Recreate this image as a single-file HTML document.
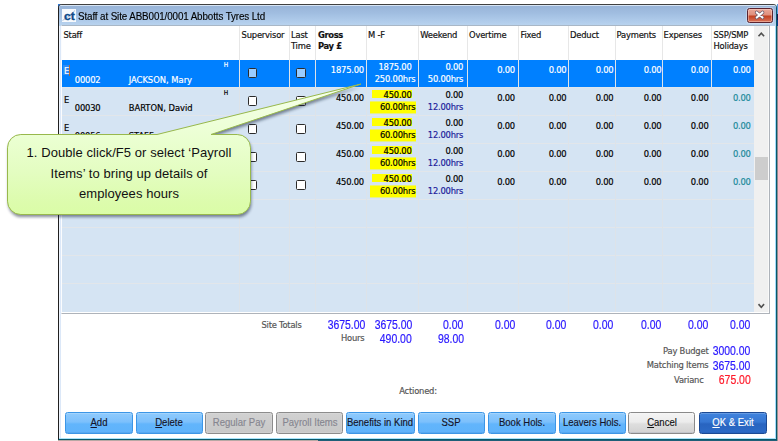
<!DOCTYPE html><html><head><meta charset="utf-8"><title>Staff at Site</title><style>
*{margin:0;padding:0;box-sizing:border-box}
html,body{width:778px;height:441px;overflow:hidden;background:#fff}
body{position:relative;font-family:'DejaVu Sans Condensed','Liberation Sans',sans-serif;font-size:9.3px;color:#000}
.abs{position:absolute}
#deskR{left:777px;top:4px;width:1px;height:437px;background:linear-gradient(#5a9ae0 0,#5a9ae0 10px,#1a1a50 10px,#1a1a50 16px,#0c3c8c 16px,#0c3c8c 22px,#8a8490 22px,#9a9494 100%)}
#deskB{left:58px;top:440px;width:719px;height:1px;background:linear-gradient(90deg,#b8a8a4 0,#b8a8a4 260px,#1f5f78 260px,#1f5f78 100%)}
#win{left:58px;top:4px;width:719px;height:436px;background:#fff;border:1px solid #202020;border-top-color:#404040;border-right-color:#08586a;border-bottom-color:#08586a;border-radius:4px 4px 0 0;overflow:hidden}
#title{left:0;top:0;width:717px;height:21px;background:linear-gradient(#d6e4f4 0,#d6e4f4 1px,#98b4d8 1.2px,#a1bee1 40%,#adc9e9 70%,#bad4ef 100%)}
#title .txt{left:18.8px;top:5.5px;font-family:'Liberation Sans',sans-serif;font-size:10.4px;line-height:12px;color:#000;white-space:nowrap;letter-spacing:-0.12px;-webkit-text-stroke:0.15px currentColor;transform:scaleX(0.9455);transform-origin:0 50%}
#lb{left:0;top:21px;width:2px;height:413px;background:linear-gradient(90deg,#eef4fd 0,#eef4fd 1px,#dce8f8 1px)}
#rb{left:716px;top:21px;width:1px;height:413px;background:#a0dcfc}
#bb{left:0;top:433px;width:717px;height:1px;background:#a8e4fc}
.t{position:absolute;white-space:nowrap;line-height:11px;font-size:9.3px;letter-spacing:-0.2px;-webkit-text-stroke:0.18px currentColor}
.r{text-align:right}
.hd{color:#111}
.vl{position:absolute;width:1px;background:#e7e7e7}
.hl{position:absolute;height:1px;background:#e2e6ea}
.cb{position:absolute;width:9.5px;height:9.5px;border:1px solid #2b2b2b;border-radius:1.5px;background:#fff}
.yl{position:absolute;background:#ffff00}
.num{font-family:'Liberation Sans',sans-serif;font-size:12px;color:#2a18ff;line-height:12px;position:absolute;white-space:nowrap;text-align:right;-webkit-text-stroke:0.2px currentColor;transform:scaleX(0.87);transform-origin:100% 50%}
.lab{color:#555}
.btn{position:absolute;top:412px;height:22px;width:68px;border:1px solid #3c96e6;border-radius:2.5px;background:linear-gradient(#8fcbfd 0,#7cc0fc 45%,#62b5fc 55%,#5fb3fb 100%);font-family:'Liberation Sans',sans-serif;font-size:10.2px;text-align:center;line-height:20.8px;color:#141428;-webkit-text-stroke:0.15px currentColor;white-space:nowrap;overflow:hidden;box-shadow:inset 0 1px 0 rgba(255,255,255,.2),inset 0 -1px 0 rgba(0,40,120,.08)}
.btn span{position:absolute;left:50%;top:0;transform:translateX(-50%) scaleX(0.935);transform-origin:50% 50%}
.btn.dis{background:linear-gradient(#d1d1d1,#c8c8c8);border-color:#8c8c8c;color:#868690;box-shadow:inset 0 0 0 1px rgba(255,255,255,.12)}
.btn.can{background:linear-gradient(#f4f4f4 0,#ececec 45%,#dedede 55%,#d2d2d2 100%);border-color:#8a8a8a;color:#111}
.btn.ok{background:linear-gradient(#4084de 0,#3676d2 45%,#2864c0 55%,#2c6ac6 100%);border-color:#1c4a94;color:#fff}
u{text-decoration:underline}
</style></head><body>
<div id="deskR" class="abs"></div><div id="deskB" class="abs"></div>
<div class="abs" style="left:58px;top:4px;width:3px;height:3px;background:#2a7ae0"></div>
<div id="win" class="abs">
<div id="title" class="abs">
<div class="abs" style="left:3px;top:4px;width:13.5px;height:13px;background:#f6f9fd"></div>
<svg class="abs" style="left:3px;top:4px" width="14" height="13" viewBox="0 0 14 13"><path d="M0.5 11.5 Q7 8 13 1.5" stroke="#a8c0dc" stroke-width="1" fill="none"/><text x="2.1" y="10.9" font-family="Liberation Sans,sans-serif" font-weight="bold" font-size="11.2" fill="#0e4a8a" stroke="#0e4a8a" stroke-width="0.35" letter-spacing="-0.1" transform="scale(1.08,0.9)" style="transform-origin:2px 10.9px">ct</text></svg>
<div class="abs txt" id="ttl">Staff at Site ABB001/0001 Abbotts Tyres Ltd</div>
<div class="abs" style="left:688px;top:3px;width:26px;height:14.7px;border:1px solid #5a2430;border-radius:2.5px;background:linear-gradient(#eaa898 0,#df8e7c 47%,#c2401f 53%,#d9735a 100%);box-shadow:0 0 0 1px rgba(255,255,255,.3),inset 0 0 0 1px rgba(255,220,210,.45)"></div>
<svg class="abs" style="left:695px;top:5px" width="12" height="10" viewBox="0 0 12 10"><path d="M2.7 2.4 L8.5 7.6 M8.5 2.4 L2.7 7.6" stroke="#6a5a6a" stroke-width="3.4" stroke-linecap="round"/><path d="M2.7 2.4 L8.5 7.6 M8.5 2.4 L2.7 7.6" stroke="#fff" stroke-width="2" stroke-linecap="round"/></svg>
</div>
<div id="lb" class="abs"></div><div id="rb" class="abs"></div><div id="bb" class="abs"></div>
</div>
<div class="abs" style="left:61px;top:25px;width:709px;height:289px;border:1px solid #aeb3ba;border-top-color:#a9b7c6;border-left-color:#fbfcfe;background:#fff"></div>
<div class="abs" style="left:62px;top:60px;width:692px;height:252px;background:#d5e4f3"></div>
<div class="abs sel" style="left:62px;top:60px;width:691.5px;height:26.8px;background:#0080ff"></div>
<div class="abs" style="left:754px;top:26px;width:15px;height:286px;background:linear-gradient(90deg,#f0f0f0 0,#f0f0f0 14px,#f9f9f9 14px)"></div>
<div class="abs" style="left:755px;top:157px;width:12.5px;height:23px;background:#cdcdcd"></div>
<svg class="abs" style="left:757px;top:31px" width="9" height="7" viewBox="0 0 9 7"><path d="M1.5 5.2 L4.3 2.1 L7.1 5.2" fill="none" stroke="#505050" stroke-width="1.6"/></svg>
<svg class="abs" style="left:757px;top:302px" width="9" height="7" viewBox="0 0 9 7"><path d="M1.5 2.1 L4.3 5.2 L7.1 2.1" fill="none" stroke="#505050" stroke-width="1.6"/></svg>
<div class="hl" style="left:62px;top:115px;width:692px"></div>
<div class="hl" style="left:62px;top:143px;width:692px"></div>
<div class="hl" style="left:62px;top:171px;width:692px"></div>
<div class="hl" style="left:62px;top:199px;width:692px"></div>
<div class="hl" style="left:62px;top:227px;width:692px"></div>
<div class="hl" style="left:62px;top:255px;width:692px"></div>
<div class="hl" style="left:62px;top:283px;width:692px"></div>
<div class="hl" style="left:62px;top:87px;width:692px;background:#dfe6ee"></div>
<div class="vl" style="left:239.2px;top:26px;height:34px"></div>
<div class="vl" style="left:239.2px;top:60px;height:252px;background:#dde3e9"></div>
<div class="vl" style="left:289px;top:26px;height:34px"></div>
<div class="vl" style="left:289px;top:60px;height:252px;background:#dde3e9"></div>
<div class="vl" style="left:315px;top:26px;height:34px"></div>
<div class="vl" style="left:315px;top:60px;height:252px;background:#dde3e9"></div>
<div class="vl" style="left:365.6px;top:26px;height:34px"></div>
<div class="vl" style="left:365.6px;top:60px;height:252px;background:#dde3e9"></div>
<div class="vl" style="left:417.8px;top:26px;height:34px"></div>
<div class="vl" style="left:417.8px;top:60px;height:252px;background:#dde3e9"></div>
<div class="vl" style="left:467px;top:26px;height:34px"></div>
<div class="vl" style="left:467px;top:60px;height:252px;background:#dde3e9"></div>
<div class="vl" style="left:518px;top:26px;height:34px"></div>
<div class="vl" style="left:518px;top:60px;height:252px;background:#dde3e9"></div>
<div class="vl" style="left:568px;top:26px;height:34px"></div>
<div class="vl" style="left:568px;top:60px;height:252px;background:#dde3e9"></div>
<div class="vl" style="left:615px;top:26px;height:34px"></div>
<div class="vl" style="left:615px;top:60px;height:252px;background:#dde3e9"></div>
<div class="vl" style="left:662px;top:26px;height:34px"></div>
<div class="vl" style="left:662px;top:60px;height:252px;background:#dde3e9"></div>
<div class="vl" style="left:711px;top:26px;height:34px"></div>
<div class="vl" style="left:711px;top:60px;height:252px;background:#dde3e9"></div>
<div class="t hd" style="left:63.5px;top:28.86px;">Staff</div>
<div class="t hd" style="left:241.6px;top:28.86px;">Supervisor</div>
<div class="t hd" style="left:291px;top:28.86px;">Last<br>Time</div>
<div class="t hd" style="left:318px;top:28.86px;font-weight:bold;letter-spacing:-0.35px">Gross<br>Pay £</div>
<div class="t hd" style="left:368px;top:28.86px;">M -F</div>
<div class="t hd" style="left:420.3px;top:28.86px;">Weekend</div>
<div class="t hd" style="left:469px;top:28.86px;">Overtime</div>
<div class="t hd" style="left:520.5px;top:28.86px;">Fixed</div>
<div class="t hd" style="left:570px;top:28.86px;">Deduct</div>
<div class="t hd" style="left:616.6px;top:28.86px;">Payments</div>
<div class="t hd" style="left:663.6px;top:28.86px;">Expenses</div>
<div class="t hd" style="left:713.5px;top:28.86px;">SSP/SMP<br>Holidays</div>
<div class="abs" style="left:63px;top:65px;width:6px;height:10px;background:#2b8cf8"></div>
<div class="abs" style="left:69px;top:65px;width:1.2px;height:10.5px;background:#a8683c"></div>
<div class="t " style="left:64px;top:65.26px;color:#fff;">E</div>
<div class="t " style="left:74.8px;top:73.86px;color:#fff;">00002</div>
<div class="t " style="left:128.7px;top:73.86px;color:#fff;letter-spacing:0">JACKSON, Mary</div>
<div class="t " style="left:223.8px;top:61.32px;color:#fff;font-size:6.6px;line-height:8px;letter-spacing:0">H</div>
<div class="cb" style="left:247.5px;top:68px;background:#99ccff;"></div>
<div class="cb" style="left:296px;top:68px;background:#99ccff;"></div>
<div class="t r " style="right:414px;top:63.86px;color:#fff;">1875.00</div>
<div class="t r " style="right:366.4px;top:60.86px;color:#fff;">1875.00</div>
<div class="t r " style="right:362.7px;top:73.36px;color:#fff;">250.00hrs</div>
<div class="t r " style="right:314.8px;top:60.86px;color:#fff;">0.00</div>
<div class="t r " style="right:314.8px;top:73.36px;color:#fff">50.00hrs</div>
<div class="t r " style="right:263px;top:63.86px;color:#fff;">0.00</div>
<div class="t r " style="right:211.5px;top:63.86px;color:#fff;">0.00</div>
<div class="t r " style="right:164.5px;top:63.86px;color:#fff;">0.00</div>
<div class="t r " style="right:116.5px;top:63.86px;color:#fff;">0.00</div>
<div class="t r " style="right:69.39999999999998px;top:63.86px;color:#fff;">0.00</div>
<div class="t r " style="right:27.299999999999955px;top:63.86px;color:#fff">0.00</div>
<div class="t " style="left:64px;top:94.26px;color:#000;">E</div>
<div class="t " style="left:74.8px;top:101.86px;color:#000;">00030</div>
<div class="t " style="left:128.7px;top:101.86px;color:#000;letter-spacing:0">BARTON, David</div>
<div class="t " style="left:223.8px;top:89.32px;color:#000;font-size:6.6px;line-height:8px;letter-spacing:0">H</div>
<div class="cb" style="left:247.5px;top:96px;"></div>
<div class="cb" style="left:296px;top:96px;"></div>
<div class="t r " style="right:414px;top:91.86px;color:#000;">450.00</div>
<div class="yl" style="left:372px;top:90px;width:40px;height:8px"></div>
<div class="yl" style="left:370px;top:101px;width:46px;height:11.5px;transform:translateY(0.45px)"></div>
<div class="t r " style="right:366.4px;top:88.86px;color:#000;">450.00</div>
<div class="t r " style="right:362.7px;top:101.36px;color:#000;">60.00hrs</div>
<div class="t r " style="right:314.8px;top:88.86px;color:#000;">0.00</div>
<div class="t r " style="right:314.8px;top:101.36px;color:#20209a">12.00hrs</div>
<div class="t r " style="right:263px;top:91.86px;color:#000;">0.00</div>
<div class="t r " style="right:211.5px;top:91.86px;color:#000;">0.00</div>
<div class="t r " style="right:164.5px;top:91.86px;color:#000;">0.00</div>
<div class="t r " style="right:116.5px;top:91.86px;color:#000;">0.00</div>
<div class="t r " style="right:69.39999999999998px;top:91.86px;color:#000;">0.00</div>
<div class="t r " style="right:27.299999999999955px;top:91.86px;color:#1a8a9a">0.00</div>
<div class="t " style="left:64px;top:122.26px;color:#000;">E</div>
<div class="t " style="left:74.8px;top:129.86px;color:#000;">00056</div>
<div class="t " style="left:128.7px;top:129.86px;color:#000;letter-spacing:0">STAFF</div>
<div class="cb" style="left:247.5px;top:124px;"></div>
<div class="cb" style="left:296px;top:124px;"></div>
<div class="t r " style="right:414px;top:119.86px;color:#000;">450.00</div>
<div class="yl" style="left:372px;top:118px;width:40px;height:8px"></div>
<div class="yl" style="left:370px;top:129px;width:46px;height:11.5px;transform:translateY(0.45px)"></div>
<div class="t r " style="right:366.4px;top:116.86px;color:#000;">450.00</div>
<div class="t r " style="right:362.7px;top:129.36px;color:#000;">60.00hrs</div>
<div class="t r " style="right:314.8px;top:116.86px;color:#000;">0.00</div>
<div class="t r " style="right:314.8px;top:129.36px;color:#20209a">12.00hrs</div>
<div class="t r " style="right:263px;top:119.86px;color:#000;">0.00</div>
<div class="t r " style="right:211.5px;top:119.86px;color:#000;">0.00</div>
<div class="t r " style="right:164.5px;top:119.86px;color:#000;">0.00</div>
<div class="t r " style="right:116.5px;top:119.86px;color:#000;">0.00</div>
<div class="t r " style="right:69.39999999999998px;top:119.86px;color:#000;">0.00</div>
<div class="t r " style="right:27.299999999999955px;top:119.86px;color:#1a8a9a">0.00</div>
<div class="t " style="left:64px;top:150.26px;color:#000;">E</div>
<div class="t " style="left:74.8px;top:157.86px;color:#000;">00057</div>
<div class="t " style="left:128.7px;top:157.86px;color:#000;letter-spacing:0">STAFF</div>
<div class="cb" style="left:247.5px;top:152px;"></div>
<div class="cb" style="left:296px;top:152px;"></div>
<div class="t r " style="right:414px;top:147.86px;color:#000;">450.00</div>
<div class="yl" style="left:372px;top:146px;width:40px;height:8px"></div>
<div class="yl" style="left:370px;top:157px;width:46px;height:11.5px;transform:translateY(0.45px)"></div>
<div class="t r " style="right:366.4px;top:144.86px;color:#000;">450.00</div>
<div class="t r " style="right:362.7px;top:157.36px;color:#000;">60.00hrs</div>
<div class="t r " style="right:314.8px;top:144.86px;color:#000;">0.00</div>
<div class="t r " style="right:314.8px;top:157.36px;color:#20209a">12.00hrs</div>
<div class="t r " style="right:263px;top:147.86px;color:#000;">0.00</div>
<div class="t r " style="right:211.5px;top:147.86px;color:#000;">0.00</div>
<div class="t r " style="right:164.5px;top:147.86px;color:#000;">0.00</div>
<div class="t r " style="right:116.5px;top:147.86px;color:#000;">0.00</div>
<div class="t r " style="right:69.39999999999998px;top:147.86px;color:#000;">0.00</div>
<div class="t r " style="right:27.299999999999955px;top:147.86px;color:#1a8a9a">0.00</div>
<div class="t " style="left:64px;top:178.26px;color:#000;">E</div>
<div class="t " style="left:74.8px;top:185.86px;color:#000;">00058</div>
<div class="t " style="left:128.7px;top:185.86px;color:#000;letter-spacing:0">STAFF</div>
<div class="cb" style="left:247.5px;top:180px;"></div>
<div class="cb" style="left:296px;top:180px;"></div>
<div class="t r " style="right:414px;top:175.86px;color:#000;">450.00</div>
<div class="yl" style="left:372px;top:174px;width:40px;height:8px"></div>
<div class="yl" style="left:370px;top:185px;width:46px;height:11.5px;transform:translateY(0.45px)"></div>
<div class="t r " style="right:366.4px;top:172.86px;color:#000;">450.00</div>
<div class="t r " style="right:362.7px;top:185.36px;color:#000;">60.00hrs</div>
<div class="t r " style="right:314.8px;top:172.86px;color:#000;">0.00</div>
<div class="t r " style="right:314.8px;top:185.36px;color:#20209a">12.00hrs</div>
<div class="t r " style="right:263px;top:175.86px;color:#000;">0.00</div>
<div class="t r " style="right:211.5px;top:175.86px;color:#000;">0.00</div>
<div class="t r " style="right:164.5px;top:175.86px;color:#000;">0.00</div>
<div class="t r " style="right:116.5px;top:175.86px;color:#000;">0.00</div>
<div class="t r " style="right:69.39999999999998px;top:175.86px;color:#000;">0.00</div>
<div class="t r " style="right:27.299999999999955px;top:175.86px;color:#1a8a9a">0.00</div>
<div class="t lab" style="left:261.4px;top:318.96px;">Site Totals</div>
<div class="num" style="right:413px;top:319.20px;color:#2a18ff">3675.00</div>
<div class="num" style="right:366px;top:319.20px;color:#2a18ff">3675.00</div>
<div class="num" style="right:314.4px;top:319.20px;color:#2a18ff">0.00</div>
<div class="num" style="right:262.6px;top:319.20px;color:#2a18ff">0.00</div>
<div class="num" style="right:211.20000000000005px;top:319.20px;color:#2a18ff">0.00</div>
<div class="num" style="right:164.5px;top:319.20px;color:#2a18ff">0.00</div>
<div class="num" style="right:116.5px;top:319.20px;color:#2a18ff">0.00</div>
<div class="num" style="right:69.39999999999998px;top:319.20px;color:#2a18ff">0.00</div>
<div class="num" style="right:27.299999999999955px;top:319.20px;color:#2a18ff">0.00</div>
<div class="t lab" style="left:341px;top:331.86px;">Hours</div>
<div class="num" style="right:366px;top:332.50px;color:#2a18ff">490.00</div>
<div class="num" style="right:314.4px;top:332.50px;color:#2a18ff">98.00</div>
<div class="t r lab" style="right:69.5px;top:344.66px;">Pay Budget</div>
<div class="num" style="right:27.299999999999955px;top:344.80px;color:#2a18ff">3000.00</div>
<div class="t r lab" style="right:69.5px;top:359.36px;">Matching Items</div>
<div class="num" style="right:27.299999999999955px;top:359.50px;color:#2a18ff">3675.00</div>
<div class="t r lab" style="right:74.39999999999998px;top:373.86px;">Varianc</div>
<div class="num" style="right:27.299999999999955px;top:374.20px;color:#ff1a2a">675.00</div>
<div class="t lab" style="left:399.2px;top:384.56px;">Actioned:</div>
<div class="btn " style="left:65.2px;width:67.5px"><span><u>A</u>dd</span></div>
<div class="btn " style="left:135.5px;width:67.5px"><span><u>D</u>elete</span></div>
<div class="btn dis" style="left:205.0px;width:67.5px"><span>Regular Pay</span></div>
<div class="btn dis" style="left:276.0px;width:67.0px"><span>Payroll Items</span></div>
<div class="btn " style="left:345.9px;width:68.9px"><span>Benefits in Kind</span></div>
<div class="btn " style="left:417.7px;width:67.4px"><span>SSP</span></div>
<div class="btn " style="left:488.4px;width:67.6px"><span>Book Hols.</span></div>
<div class="btn " style="left:558.9px;width:67.0px"><span>Leavers Hols.</span></div>
<div class="btn can" style="left:628.0px;width:67.4px"><span><u>C</u>ancel</span></div>
<div class="btn ok" style="left:699.0px;width:67.7px"><span><u>O</u>K &amp; Exit</span></div>
<svg class="abs" style="left:0;top:70px" width="380" height="160" viewBox="0 70 380 160">
<defs><linearGradient id="cg" gradientUnits="userSpaceOnUse" x1="0" y1="84" x2="0" y2="214.5"><stop offset="0" stop-color="#f6ffed"/><stop offset="0.262" stop-color="#efffdb"/><stop offset="0.44" stop-color="#eaffd0"/><stop offset="0.66" stop-color="#e4fdc2"/><stop offset="0.915" stop-color="#dcfcac"/><stop offset="1" stop-color="#dafda7"/></linearGradient>
<filter id="sh" x="-10%" y="-10%" width="125%" height="130%"><feGaussianBlur stdDeviation="1.6"/></filter></defs>
<path d="M20.8 134.5 H157 L361 84 L211 134.5 H237.2 A13.3 13.3 0 0 1 250.5 147.8 V201.2 A13.3 13.3 0 0 1 237.2 214.5 H20.8 A13.3 13.3 0 0 1 7.5 201.2 V147.8 A13.3 13.3 0 0 1 20.8 134.5 Z" transform="translate(0.8,2.6)" fill="#101830" opacity="0.5" filter="url(#sh)"/>
<path d="M20.8 134.5 H157 L361 84 L211 134.5 H237.2 A13.3 13.3 0 0 1 250.5 147.8 V201.2 A13.3 13.3 0 0 1 237.2 214.5 H20.8 A13.3 13.3 0 0 1 7.5 201.2 V147.8 A13.3 13.3 0 0 1 20.8 134.5 Z" fill="url(#cg)" stroke="#98b84c" stroke-width="1"/>
</svg>
<div class="abs" id="co" style="left:7px;top:143px;width:244px;text-align:center;font-family:'Liberation Sans',sans-serif;font-size:13px;line-height:20.5px;color:#111;letter-spacing:0.07px">1. Double click/F5 or select ‘Payroll<br>Items’ to bring up details of<br>employees hours</div>
</body></html>
